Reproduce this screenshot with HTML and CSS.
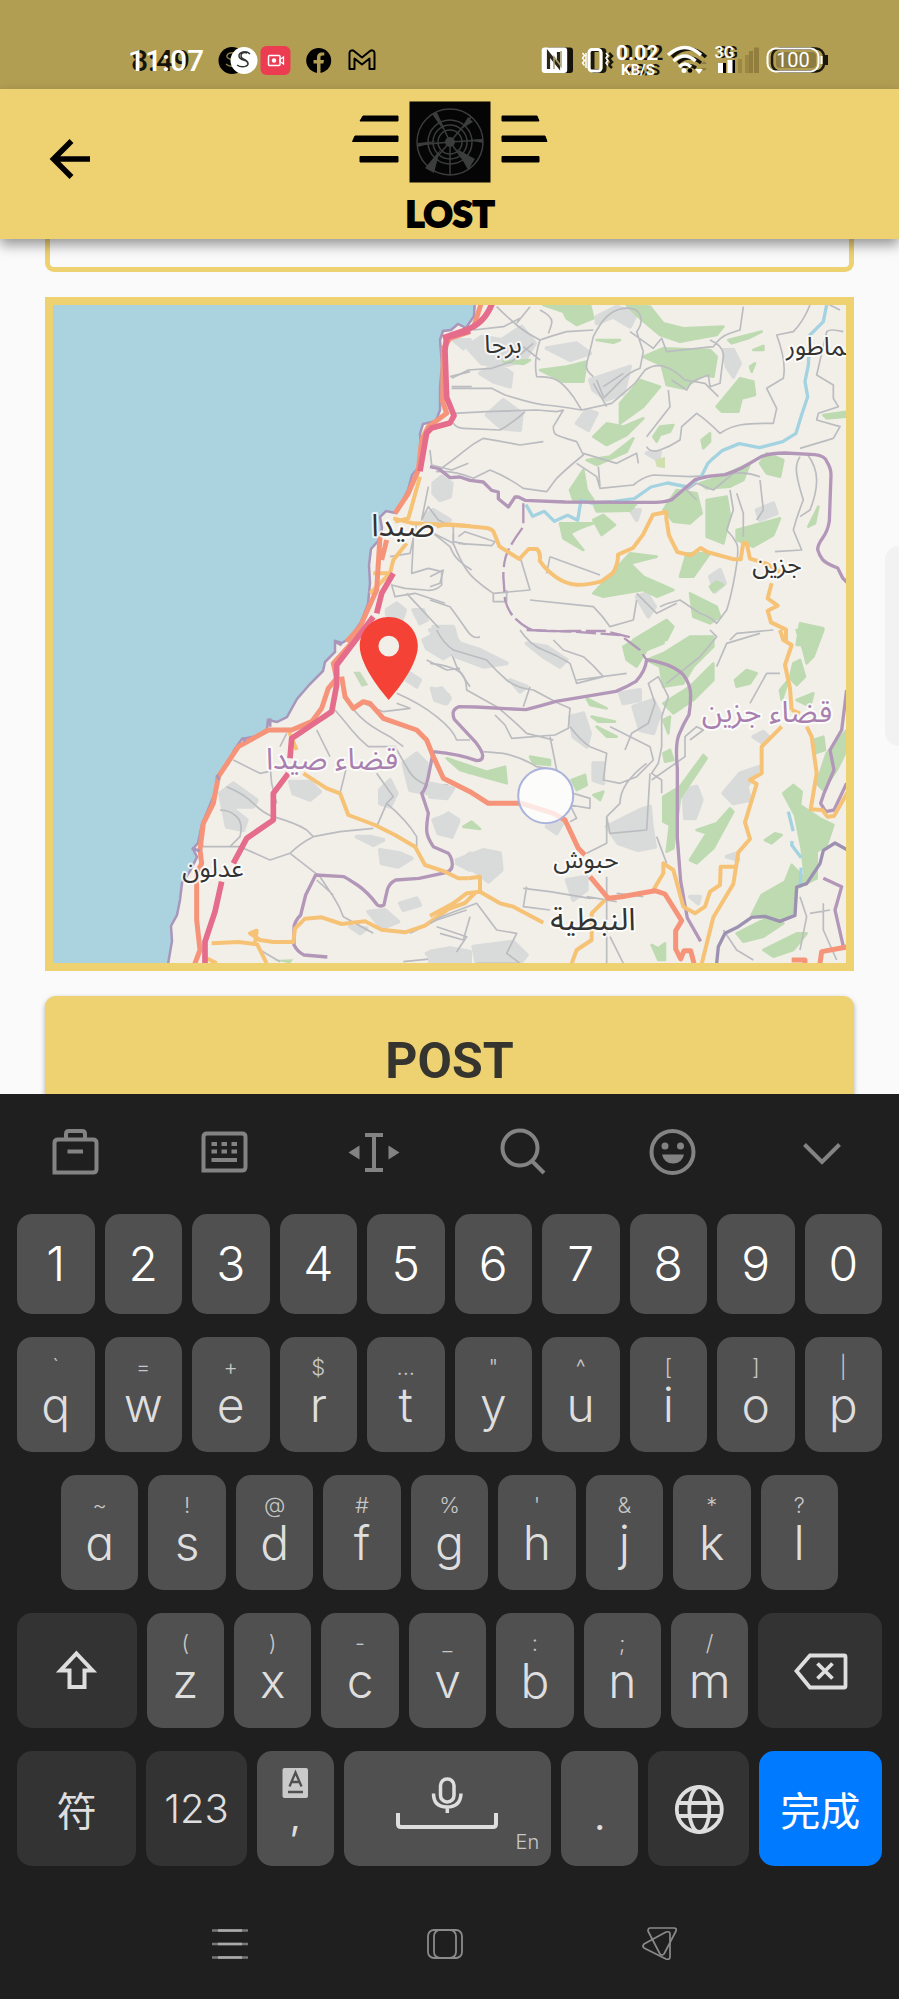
FILE: index.html
```html
<!DOCTYPE html>
<html lang="en">
<head>
<meta charset="utf-8">
<meta name="viewport" content="width=device-width, initial-scale=1">
<title>Lost</title>
<link rel="stylesheet" href="styles.css">
</head>
<body>
<header class="status">
  <div class="status-side">
    <svg class="s-icon" width="78" height="32" viewBox="128 44 78 32">
      <text x="131" y="71" class="clock ghost">8:49</text>
      <text x="128" y="71" class="clock">11:07</text>
    </svg>
    <svg class="s-icon" width="76" height="32" viewBox="216 44 76 32">
      <circle cx="232" cy="60.500" r="13.500"/>
      <path d="M237 55c-4-4-11-2-10 2 1 3 8 2 9 6 0 4-7 4-10 1" fill="none" stroke="#8c7c42" stroke-width="1.500"/>
      <circle cx="244" cy="60.500" r="13.500" fill="#fff"/>
      <path d="M250 54c-4-4-11-2-11 2 0 5 8 3 9 7 1 4-7 5-11 2M247 53c-4-1-6 0-6 3 0 4 7 3 7 8" fill="none" stroke="#333" stroke-width="1.500"/>
      <rect x="260.500" y="46" width="30" height="29" rx="6" fill="#ec3c52"/>
      <rect x="268.500" y="55.500" width="11.500" height="10" rx="1" fill="none" stroke="#fff" stroke-width="1.500"/>
      <circle cx="274" cy="60.500" r="2.200" fill="#fff"/>
      <path d="M280 59.500l3.500-2.500v7l-3.500-2.500z" fill="none" stroke="#fff" stroke-width="1.300"/>
    </svg>
    <svg class="s-icon" width="32" height="32" viewBox="302 44 32 32">
      <circle cx="318.700" cy="60.500" r="12.500"/>
      <path d="M317 73V63.500h-3.500v-3.600h3.500v-2.500c0-3.500 2-5 4.800-5 1 0 2 .1 2.500.2v3h-1.800c-1.700 0-2 .9-2 2v2.300h3.500l-.6 3.600h-2.900V73z" fill="#b29e52"/>
    </svg>
    <svg class="s-icon" width="36" height="32" viewBox="344 44 36 32">
      <path d="M349.500 69V53c0-2 2.500-3.500 4.500-2l8 6.500 8-6.500c2-1.500 4.500 0 4.500 2v16h-5V58.500l-7.500 6-7.500-6V69z" fill="none" stroke="#000" stroke-width="2" stroke-linejoin="round"/>
    </svg>
  </div>
  <div class="status-side status-right">
    <svg class="s-icon" width="36" height="32" viewBox="541 44 36 32">
      <rect x="546" y="47.500" width="27" height="25.500" rx="3" fill="#14120a"/>
      <rect x="541.700" y="47.500" width="25.500" height="25.500" rx="3" fill="#fff"/>
      <path d="M548.500 69V53.500l10 12.500V52" fill="none" stroke="#2a2718" stroke-width="3.200"/>
      <path d="M554 69V57l7 9V51" fill="none" stroke="#aa9f70" stroke-width="1.500"/>
    </svg>
    <svg class="s-icon" width="35" height="32" viewBox="579 44 35 32">
      <rect x="592.500" y="50" width="12" height="21" rx="2" fill="none" stroke="#1a170c" stroke-width="4"/>
      <path d="M609 53l3 3-3 3 3 3-3 3 3 3" fill="none" stroke="#1a170c" stroke-width="2.500"/>
      <rect x="589" y="49.500" width="12" height="21.500" rx="3" fill="none" stroke="#fff" stroke-width="3"/>
      <path d="M582.500 53l2 2.500-2 2.500 2 2.500-2 2.500 2 2.500M586 53v15M606 53l2 2.500-2 2.500 2 2.500-2 2.500 2 2.500" fill="none" stroke="#fff" stroke-width="1.500"/>
    </svg>
    <svg class="s-icon" width="49" height="34" viewBox="616 44 49 34">
      <text x="621" y="60" class="speed ghost">0.02</text><text x="626" y="75" class="unit ghost">KB/S</text>
      <text x="616" y="60" class="speed">0.02</text><text x="621" y="75" class="unit">KB/S</text>
    </svg>
    <svg class="s-icon" width="44" height="32" viewBox="667 44 44 32">
      <g fill="none" stroke="#14120a" stroke-width="3.500"><path d="M672 57q17-16 34 0M678 63q11-10 23 0M683 68q6-5 13 0"/></g>
      <g fill="none" stroke="#fff" stroke-width="3.500"><path d="M668 55q17-15 33 0M673.500 61q11-10 22 0M679 67q6-6 12 0"/></g>
      <circle cx="684" cy="70.500" r="2.500" fill="#fff"/><circle cx="690" cy="70.500" r="2.300"/>
      <path d="M695 69h8l-4 5z" fill="#fff"/><path d="M701 64l3-3 3 3zM701 68l3 3 3-3z" fill="#8c7c42"/>
    </svg>
    <svg class="s-icon" width="50" height="32" viewBox="713 44 50 32">
      <path d="M738 59h4v14h-4zM745 55h4v18h-4z" fill="#9b8844"/><path d="M749 51h4v22h-4zM754 47.500h5v25.500h-5z" fill="#927f3d"/>
      <path d="M721 63h5v10h-5zM730 60h5v13h-5z"/>
      <path d="M718 63h5v10h-5zM727.500 60h5v13h-5z" fill="#fff"/>
      <text x="718" y="58" class="net ghost">3G</text><text x="714.500" y="58" class="net">3G</text>
    </svg>
    <svg class="s-icon" width="64" height="32" viewBox="765 44 64 32">
      <rect x="772" y="48.500" width="52" height="23" rx="8" fill="none" stroke="#1a170c" stroke-width="2.500"/>
      <rect x="776" y="52" width="40" height="16" rx="4" fill="#8c7c42"/>
      <path d="M826.500 55v10" stroke="#1a170c" stroke-width="3"/>
      <rect x="767.500" y="48.500" width="51" height="23" rx="8" fill="none" stroke="#fff" stroke-width="2"/>
      <path d="M821.500 56v8" stroke="#fff" stroke-width="2"/>
      <text x="793" y="67" class="batt">100</text>
    </svg>
  </div>
</header>

<nav class="appbar">
  <button class="back" aria-label="Back">
    <svg width="44" height="44" viewBox="48 137 44 44"><path d="M90 159H54M71.500 141L53.500 159l18 18" fill="none" stroke="#000" stroke-width="5.500"/></svg>
  </button>
  <svg class="logo" width="200" height="134" viewBox="350 99 200 134">
    <path d="M363 116h35v5h-38zM355 136h43v5.500h-45.500zM360 156.500h38v5.500h-38zM502 116h35l2 5h-37zM502 136h43l2 5.500h-45zM502 156.500h37v5.500h-37z" stroke="#000" stroke-linejoin="round"/>
    <rect x="409.500" y="101.500" width="81" height="81" fill="#050505"/>
    <g fill="none" stroke="#3b3c3c" stroke-width="1.500"><circle cx="450" cy="142" r="33"/><circle cx="450" cy="142" r="22"/><circle cx="450" cy="142" r="12"/><circle cx="450" cy="142" r="17"/><path d="M450 142L436 112M450 142l21-25M450 142l33-2M450 142l-32 3M450 142l-22 25M450 142l20 27M450 142v33"/></g>
    <g fill="#3b3c3c"><circle cx="450" cy="142" r="5"/><path d="M440 150l-15 18 9 5zM457 149l18 10-7 11zM437 141l-19 2v4zM444 131l-8-19-4 2zM461 129l7-12 5 5zM468 140l15-1v4z"/></g>
    <text x="450" y="227" class="logo-text">LOST</text>
  </svg>
</nav>

<main class="content">
  <textarea class="field" aria-label="Description"></textarea>
  <div class="map">
  <svg viewBox="53 305 793 658" role="img" aria-label="Map">
    <rect x="53" y="305" width="793" height="658" fill="#aad3df"/>
    <path fill="#f2efe9" stroke="#a896bb" stroke-width="2.500" d="M475 300L474 316 466 328 458 324 451 330 443 331 440 340 442 365 440 387 440 410 436 421 423 424 420 434 421 448 418 468 412 475 408 490 396 513 386 511 380 517 382 528 379 540 371 549 369 565 370 583 368 604 361 622 350 638 342 643 335 641 335 652 325 662 323 671 310 684 297 699 287 717 277 722 268 720 267 729 258 736 242 739 234 750 228 764 217 777 216 790 210 805 202 824 198 843 193 849 197 857 190 871 182 883 180 900 177 915 171 926 172 941 167 970L860 970V295z"/>
    <g transform="translate(430 290) scale(.333333)">
      <g fill="#d9dada" class="soft-gray">
        <path d="M110 170l45-30 60 10 60-40 40 50-30 50-70 20-60-10zM150 250l50-30 45 30-5 40-50-15zM170 375l50-45 55 40-5 50-55-5zM10 580l25-20 30 20-5 40-30 10-20-20zM440 400l30-40 30 10-25 50zM620 920l30-10 25 40-20 30zM840 860l30-20 15 40-30 25zM880 180l30 0 20 40-20 40-20-30zM500 80l60-30 60 20-20 40-50-30-50 20zM480 270l60-20 60-20-20 80-50 20-40-30zM350 175l90-15 40 30-60 20zM650 490l40-5-5 25zM600 660l30 0-10 30zM980 660l50-20 10 30-50 20z"/>
      </g>
      <g fill="#bddab1" class="soft-green">
        <path d="M340 45l140 0 10 40-50 20-30-20-10-20zM590 45l70 5 40 50 60 15 120-5-20 25-110 20-60-20-60-50zM640 200l60-25 140 5 20 20-10 60-30-5-60 40-50-10-15-60zM330 240l80-10 60-15-10 60-60 0zM570 340l60-70 60 20-50 60-70 50zM490 440l40-40 50 10 60-25-50 50-60 30zM470 510l70-10 70-55-20 40-90 40zM860 350l70-85 40 10 5 40-40 10-10 40-50 0zM420 600l40-60 10 60 20 30-60 0zM490 640h130l-20 22-100 2zM700 660l40-60 60 10 15 60-35 30-50-5zM810 580l60-20 90-40-20 50-40 20-70 5zM990 520l20-30 50 20-10 50-40-10zM830 630l60-10 10 60-20 80-50-20zM920 720l130-35-20 50-60 35-50-20zM490 690l30-15 35 30-40 30zM390 700l100 0-40 15-30 15 40 50-60-35zM490 910l110-120 80 10-80 20 40 40 90 40-50 20-40-20-120 20zM750 860l20-70 70 0-50 70zM780 910l80 40 10 30-30 20-50-20zM1110 1000l70 15-20 50-60 0zM1135 710l30-60-10 50zM1180 375l70-10v15l-60 5zM895 150l100-25-40 20-50 15zM815 450l25-20 0 25-20 20zM670 440l20-30 40-5-10 20-30 10-10 20zM500 150h70l-20 8zM220 215l80-5-20 12zM840 890l20-15 20 10-30 20zM610 1050l100-60 20 20-20 40zM960 230l15-10-10 25zM970 180l30-12v12z"/>
      </g>
      <path fill="#cfe0ae" d="M675 510l30-10v35l-25-5z"/>
      <g class="minor">
        <path d="M200 50q30 30 60 55t70 45q60-20 80-25l80-5M330 60q40 20 35 40t-10 30M65 265l50-25 70-5 60-20 65-55M65 295l120 0 40 20q90 28 120 30t110 15l90-20 70-60 30-40q30-20 60-10t60 40l60 10 40 40M330 150q-20 60-10 110 40 0 60 10t50 50l25 40M490 260q-26-20-20-40t20-80q20-40 40-60t50-25q40-5 50 20t-10 50l20 60-10 50q-30 10-60 40l-50 50M600 125l70 50 25-30 15 40 140-15q20-30 50-40t30-10l10-70M840 150q44 20 40 50t-10 80l-30 10-5-35-50 20-15 25-45-30M1140 45q-20 50-50 80l-50 10q30 80 20 130l-50 30 30 60-10 45q-70 0-100 5t-60 25q-40-40-70-60l-45 40-5 40q-30 20-60 30t-40-10M650 440l70-90-5-50M70 400q10 15 30 15l110 5q50-30 75-55M70 370l100-5 150-5 60 5 20-5-30 50q0 20 10 25t60 20l20 40q-50 40-80 70l-30 40-70-10q-50-35-100-55l-50 25q-60-25-110-20 50-35 80-60t60-40q60 10 110 20l70-10M460 490l100 30 60-30 5 30M440 520l60 40 10 35 100-10q30-25 60-30l110 5 80-5M510 590l-5-60M990 560q-40-15-80-10l-60 50-50-20-30 20 30 30M900 600l10 60-20 60q20 20 30 40t-10 120q-10 50-20 80l-30 40q-20-20-50-30l-60-40q-40 10-60 20M920 610l20 60 0 70M990 570l10 90-20 30M1110 500q-14 20-10 50t20 80q-20 50-30 90l25 60-80 5M1130 490q30 40 30 80t-20 90l-30 20M1230 60l-40-20M1240 125q-40-10-50 0l-30 130 50 30 0 40 15 25-60 20-5 20 70 20-20 35-100 30M10 730l60 30q20 50 40 80t80 70l110-10-30-100M70 730v35M190 910v25h40l0-35M300 930l190 20q30 30 50 60l70-20 10-60M360 800l150 55M360 800l-10 50M0 930l60 20q30 40 50 70t40 20M0 860l40-20-10 40-30 10M620 910l60 60 60-30M900 1050l20-20 110-10M85 740l20-15 90 30-10 12-100-7M130 120l90-10 50-25M300 50l-40 50M280 170l50 40M490 280l40 70M500 270l20 50M520 290l60-40"/>
      </g>
      <path class="river" d="M1190 45l-10 50-40 40-5 90-10 50 8 45-20 60-15 50-40 25-70 18-60-12-50 20-30 25-15 15-20 40-40 30-60-12-50 12-50 35-60 8-70 5-30-8-10 60-30-15-40 18-30-30-35 15-20-35"/>
      <g class="bound">
        <path d="M0 530l25 5 35 28 30-2 30 10 40 5 25 25 20 5 0 20 30 25 20-30h10l20 10 120 5 180 1h90q30 0 50-8l70-60q40-12 90-15 30-10 50-20l60-35q30-10 70-10l90 5q30 4 35 20 13 20 13 40l-5 140q-5 30-20 50t-15 35q5 18 15 30t45 25l15 30 30 30"/>
        <path d="M280 640v70q-30 40-45 70t-15 80l5 70q10 35 30 55t40 30 130 8l100 0 80 20" stroke-dasharray="60 14" stroke-width="7"/>
      </g>
      <path class="road" d="M20 710l30-8 120 12q16 4 20 10l18 45 60 38 28-30h25q12 12 8 35 20 30 50 50t60 22 75-10l35-25q16-30 15-55l45-20 30-40 30-60 40-8 0 20 8 50 25 50 40 10 30-22 20 12 80 22h20l8-50 10 2 10 46 50 15 40 25M1025 880l-12 45 30 22-30 15 10 35 45 22v32"/>
    </g>
    <g transform="translate(40 290) scale(.333333)">
      <g fill="#d9dada" class="soft-gray"><path d="M1040 960l30-20 25 20-10 30-40 20zM1120 960l30 0 10 30-20 10zM1180 1010l60 0 10 40h-50zM1150 680l30-20 50 30-70 10zM1240 150l50 0-20 25z"/></g>
      <g class="minor"><path d="M1170 480l5 45 60 15 50-20M1165 590l-20 100 20-40 30 40 40 20M1180 730l50 40q10 25 25 40t40 30M1240 710v45l40 8M1120 750l-5 100 50-15 40 10 0 40q-20 20-50 15l-60-5-40-10 10 35 60-10 90 30M1100 910l130 140M1130 700l-20 90-60 10M1230 260l60-15M1235 290l60 0"/></g>
      <path class="road" d="M1140 560l-35 125-40 10M1060 685l60 15 170 8M1100 760l-40 50-10 40h-50M1050 850l-60 60"/>
      <path class="trunk" d="M1290 125l-60 20-20 30-2 160 12 35-55 40-20 40-10 90-30 70-40 60M1020 740l-10 160-50 110-40 45M1040 750l-15 60"/>
      <path class="motor" d="M1290 122l-70 20-5 40 5 140 22 55-12 22-55 15-15 15-20 115M1060 850l-35 60-15 60"/>
    </g>
    <path class="trunk-thin" d="M481 304l-7 22"/>
    <path class="motor-thin" d="M492 304q-8 20-26 26l-23 8"/>
    <g transform="translate(40 630) scale(.333333)">
      <g fill="#d9dada" class="soft-gray"><path d="M540 490l40-30 70 50-10 20-70 0 50 40-10 30-50-10zM750 455l60 0 30 30-30 25-50-20zM1090 400l40-30 30 30 0 90-50-10zM1020 480l30-30 20 40-20 40-30-10zM950 620l40 0 40 10-30 15zM1020 660l60 10 35 15-40 25-50-10zM1180 570l40-15 35 20-20 45-40-10zM985 845l50-5 40 35-50 20zM1080 820l50-15 10 20-50 15zM930 890l50 5-20 15zM1160 970l70-15 60 10v30l-110 0zM1110 130l30 20-10 20-30-20zM1175 175l50 20-10 25-30-10zM1150 30l40-20 60 50-40 25-50-30zM1250 700l40-30v50z"/></g>
      <path fill="#c3d9ba" d="M940 125l20 0 25 40-20 5z"/><path fill="#bddab1" d="M1220 385l70 20v30zM1270 595l20-20v20zM700 990l60-2-10 12z"/>
      <g class="minor"><path d="M885 240q30 35 50 60t50 50l80 0q20 35 40 70t60 45l60 0M910 200q20 30 50 60t90 60l40 30M1190 0q40 50 60 110l40 60M1160 90l60 30 40-5M970 220l60 25 80-10-40-15M1070 190q70 30 120 70t60 70l40 0M580 390l80 40 25-5M685 350l10 110 15 60M740 310l-20 40M830 300l40 80M920 410l-20 80M1010 430l50 70-20 20q60 50 90 100l0 30M1040 520l-30 70M560 470q50 20 80 50t60 40q70 20 100 40l20 20 80-15 100-10M820 620q-40 20-70 50l-60 20-90-40-110 0-10-20M540 540q30 0 50 20t10 60l-30 30M750 670l90 70q20 30 40 60t30 60l90 50M1110 910l80-40 90-30M1190 890l90 30-40 60-150 15M830 750l50 45M660 960l60 35"/></g>
      <g class="bound"><path d="M1180 365q-8 38-15 75t-20 50l20 60q-5 30-5 50t20 50l45 20q12 15 12 35t-30 25l-70 15-70 5q-20 10-25 30t-10 45q-12 6-20 0-30-40-60-60t-40-25l-85-5-30 60-15 60q-20 20-20 40t0 50q10 20 30 30l70 6"/></g>
      <path class="road" d="M745 300l25 60M790 430l70 45 40 15 25 65 80 30 60 30 60 35 30 55 60 20 40 20h30M515 940l80-4 50 6 5-40-20 8 30 20 40 6h60l5-40 30-30 50-4 60 20 70-8 50 25 70 8 60-20 70-50 50-18 30-30M650 940l30 60M500 985l30 15"/>
      <path class="trunk" d="M970 0l-90 100 10 45-25 30-20 60-30 40-60 25-70 0-90 50-60 90-15 80-30 60-10 80 5 40-15 30v140l10 90-30 80M905 140l10 60 25 35 30-20 20 5 40 45 100 35 30 30 20 50"/>
      <path class="motor" d="M1000-40l-110 145 0 60-15 80-60 40-60 40-5 60M745 430l-45 60 0 80-80 55-40 75M545 755l-20 90-30 90 0 65"/>
      <path fill="none" stroke="#a896bb" stroke-width="9" d="M885 35l20 10M690 265v25M605 325l12 8M530 435l8 14M455 655l25 8"/>
    </g>
    <g transform="translate(430 630) scale(.333333)">
      <g fill="#d9dada" class="soft-gray"><path d="M10 180l25-5 25 30-10 15-20-5zM0 0h60l30 40 60 20 80 40-70 10-80-30-60-50zM290 40l60 10 60 40-20 20-50-30zM240 150l50 20-20 15zM420 260l40-10 20 60-10 40-40-30zM610 230l60-20 20 40-20 60-40-10zM570 190l60-10 0 30-50 10zM0 460l70 15-20 30-50-5zM15 575l40-25 30 20-20 50-30-10zM80 690l80-30 50 10 5 50-40 35-30-25zM490 400l30 0 0 60-30-10zM530 590l100-50 30-10 5 60 10 60-50 10-60-20zM760 480l40-10 15 40-20 55-30 0zM880 490l50-60 60-20-40 60 10 40-50 10zM970 320l30-15 20 20-20 15zM410 750l60-10 0 40-40 30zM780 800l30 0-5 20zM130 950l120-15 40 40-20 25H140zM0 965l60-10 30 30-20 15H0zM350 590l50-15-20 35zM890 680l30-10 5 20z"/></g>
      <g fill="#bddab1" class="soft-green"><path d="M580 50l60-35 70-15-10 40-50 20-30 50-30-20zM700 70l80-50 70 0 0 30-60 60-30 50-60 10-10-60-40-20zM700 220l80-50 70-70 0 50-60 60-60 40zM700 270l20-10-5 50zM1050 180l25-30-20 60zM915 150l35-30 30 10-20 30-40 10zM1090 100l20-10 15 50-25 25-20-20zM1100 0h80l-30 80-20 20-10-40zM1150 330l30-10 5 40-30 10zM1190 370l60-70v60l-30 60-40 60-20-20zM50 385l120 40 55-15 5 50-70-20-70-20zM300 380l60 10 0 15-50-5zM425 450l40-15 5 30-30 15zM490 495l30-10-10 25zM700 500l50-30 70-95 10 10-80 120-20 150-20 10 10-80-20-10zM800 600l60-20 40-45 10 10-60 110-50 45-20-10 50-80zM1060 490l30-25 25 20-5 40 60 40 40 20-20 60-30 20 0 80-60 30-5 70-60 30-70-20 30-60 70-40 20-50 40 40-10-90-20-100zM1100 210l50-20-10 40zM470 205l60 30-50-10zM485 260l70 15-50 0zM500 290l60 30-30 0zM100 590l25-15 25 22zM665 945l20 10 20-15 0 50-20 0zM920 910l80-40 60 10-60 40-60 15zM1000 960l100-50 30 0-40 50-60 20zM700 370l20-10 10 30-25 5zM1005 630l30-20 20 5-30 25z"/></g>
      <g class="minor"><path d="M0 100q50 5 80 20t30 60l90 50q50 40 90 80l80 20M20 0q20 40 50 60l100 30q30 35 60 60t80 30l75 40 35 15-5 60-40 20-130 10-20-40-30-30M270 0q30 45 70 60t80 40l20 60 80-20q-30-35-60-60l-60-20-30-30M440 150l150-20M280 230l20-60M420 290q30 40 60 60l50 20-10 80 50 10 50-20 50-50-10-40-100-50-20-10M585 360l20-50 50-30 20-60-20-60 30-20 30 60-20 60 0 90-10 50-20 30 30 20 0 40M650 400q-40 30-60 60t-20 60l-40 40 10 50 110-10 10-170M780 330l40-30-20-10-35 30 0 60-100 70M360 320l20 100-60-10q-50-30-100-40l-60-5M430 490l50 15 0 30-60-10 20 40-20 10M530 560v80l-60 30M840 0l20 20-50 60-100 80M1050 130h-40l-50 90M860 110l30-70 100-30M530 740v260M540 920l40 80M0 880q30-20 60-30l80-30q30 40 60 80l60 10-30 60 40 30H140M100 930l-70-20M100 930l20-70M290 770l-10 60 80 10M280 775l80 10 120 20M470 800l90 15M560 790l80 10M680 620l30 80M880 900l40 60 50 30M1110 800l20 60-20 100M1180 820l0 80 40 90M1140 850l60-10"/></g>
      <path class="river" d="M1075 545l15 60-5 40 30 40-5 90" stroke-dasharray="60 30"/>
      <g class="bound">
        <path d="M10 365q80 8 130 27 18 0 18-14t-20-40l-65-70q-12-30 15-38l50 1 150 8q45-12 90-25l90-15 90-15q30-12 60-30 28-30 32-65 30 4 60 15t50 30q22 30 22 60t-5 60q-18 30-30 60t-5 100v210l10 130 20 110 40 70"/>
        <path d="M290 0l140 5 140 10 60 45 23 35" stroke-dasharray="60 14" stroke-width="7"/>
        <path d="M1250 180l-15 120-35 60 12 60-30 70-10 30 15 25 25-5 38-80M1180 745l55 25-20 70 25 110"/>
        <path d="M860 1000l5-50 20-40 40-20 40-28 40-3 45 15 45-18 5-85 30-10 40-60 10-40 35-22 35 20" stroke="#9c91b0"/>
      </g>
      <path class="road" d="M115 745l35-5 0 45-40 5-40 30-70 38M150 785l60 35 40 10 90 48M525 810l-40 40v80l-45 30-15 40M670 780l30-50v-30l30 20 30 110 35 20 30-20 15-45 30-20 2-55h50M1055 290l-60 60 0 80-35 20 20 12-35 115 15 50-35 40-15 95-60 100-35 140M1050 0l10 30 25 15-20 60 15 70 5 65M1130 290l15 30 15 110-18 108 35 2 15 20 20-2 40-70M1085 240l25 10"/>
      <path class="trunk" d="M8 375l32 70 80 40 55 35h100l95 30 35 20 40 85 20 20M480 740l55 65 40-5 100-18 30 10 50 80-18 30 0 55 15 30 10-25 20 0 10 38M1170 1000l5-35 80-15M1085 990h40v10"/>
    </g>
    <g class="label">
      <text x="503" y="353">برجا</text>
      <text x="822" y="355">عماطور</text>
      <text x="403" y="536" class="big">صيدا</text>
      <text x="777" y="573">جزين</text>
      <text x="213" y="877">عدلون</text>
      <text x="586" y="868">حبوش</text>
      <text x="593" y="930" class="big">النبطية</text>
      <text x="332" y="769" class="area">قضاء صيدا</text>
      <text x="767" y="722" class="area">قضاء جزين</text>
    </g>
    <path transform="translate(339 608.700) scale(4.150)" fill="#f44336" fill-rule="evenodd" d="M12 2C8.130 2 5 5.130 5 9c0 5.250 7 13 7 13s7-7.750 7-13c0-3.870-3.130-7-7-7zm0 9.500a2.500 2.500 0 1 1 0-5 2.500 2.500 0 0 1 0 5z"/>
    <circle cx="545.700" cy="795.700" r="27.500" fill="#fff" fill-opacity=".78" stroke="#a9b3dc" stroke-width="2"/>
  </svg>
  </div>
  <button class="post">POST</button>
</main>
<div class="edge-handle"></div>

<section class="keyboard" aria-label="Keyboard">
  <div class="tools">
    <button aria-label="Toolbox"><svg width="52" height="52" viewBox="48 1126 52 52"><path d="M53.500 1172.500V1143q0-3.500 3.500-3.500h35q3.500 0 3.500 3.500v26q0 3.500-3.500 3.500zM65 1139v-5q0-3 3-3h13q3 0 3 3v5M66.500 1151.500h15.500"/></svg></button>
    <button aria-label="Keyboard layout"><svg width="52" height="52" viewBox="197 1126 52 52"><path d="M202.500 1170.500V1137q0-3.500 3.500-3.500h35q3.500 0 3.500 3.500v30q0 3.500-3.500 3.500zM210.500 1160h25.500M210.500 1144h5.500m4.500 0h5.500m4.500 0h5.500M210.500 1151.500h5.500m4.500 0h5.500m4.500 0h5.500"/></svg></button>
    <button aria-label="Move cursor"><svg width="52" height="52" viewBox="347 1126 52 52"><path d="M364 1135h18M364 1170h18M373 1135v35"/><path class="solid" d="M347.500 1152.500l11-7v14zM398.500 1152.500l-11-7v14z"/></svg></button>
    <button aria-label="Search"><svg width="52" height="52" viewBox="496 1126 52 52"><circle cx="519" cy="1148" r="17.500"/><path d="M531 1161l12 12"/></svg></button>
    <button aria-label="Emoji"><svg width="52" height="52" viewBox="647 1126 52 52"><circle cx="672.500" cy="1152" r="21"/><path class="solid" d="M662 1154.500h22q-2 9-11 9t-11-9z"/><circle class="solid" cx="665" cy="1146" r="3.500"/><circle class="solid" cx="680.500" cy="1146" r="3.500"/></svg></button>
    <button aria-label="Hide keyboard"><svg width="52" height="52" viewBox="798 1126 52 52"><path d="M806.500 1144.500l17.500 17.500 17.500-17.500"/></svg></button>
  </div>
  <div class="rows">
    <div class="row numbers"><button class="key">1</button><button class="key">2</button><button class="key">3</button><button class="key">4</button><button class="key">5</button><button class="key">6</button><button class="key">7</button><button class="key">8</button><button class="key">9</button><button class="key">0</button></div>
    <div class="row"><button class="key"><small>`</small>q</button><button class="key"><small>=</small>w</button><button class="key"><small>+</small>e</button><button class="key"><small>$</small>r</button><button class="key"><small>...</small>t</button><button class="key"><small>"</small>y</button><button class="key"><small>^</small>u</button><button class="key"><small>[</small>i</button><button class="key"><small>]</small>o</button><button class="key"><small>|</small>p</button></div>
    <div class="row inset"><button class="key"><small>~</small>a</button><button class="key"><small>!</small>s</button><button class="key"><small>@</small>d</button><button class="key"><small>#</small>f</button><button class="key"><small>%</small>g</button><button class="key"><small>'</small>h</button><button class="key"><small>&amp;</small>j</button><button class="key"><small>*</small>k</button><button class="key"><small>?</small>l</button></div>
    <div class="row"><button class="key fn wide" aria-label="Shift"><svg width="44" height="44" viewBox="56 1648 44 44"><path d="M77.500 1652.500l16 17h-8V1686h-15v-16.500h-9z" fill="none" stroke="#dedede" stroke-width="4"/></svg></button><button class="key"><small>(</small>z</button><button class="key"><small>)</small>x</button><button class="key"><small>-</small>c</button><button class="key"><small>_</small>v</button><button class="key"><small>:</small>b</button><button class="key"><small>;</small>n</button><button class="key"><small>/</small>m</button><button class="key fn edge" aria-label="Backspace"><svg width="56" height="40" viewBox="793 1649 56 40"><path d="M797.500 1669l13.500-15.500h34q1.500 0 1.500 1.500v29q0 1.500-1.500 1.500h-34zM818.500 1661.500l15 15m0-15l-15 15" fill="none" stroke="#dedede" stroke-width="3.800"/></svg></button></div>
    <div class="row"><button class="key fn wide cjk">符</button><button class="key fn mid">123</button><button class="key comma"><svg width="26" height="32" viewBox="282 1766 26 32"><rect x="282.500" y="1767" width="25.500" height="30" rx="2" fill="#cacaca"/><path d="M289.500 1785.500l6-14 6 14M291.500 1781h8M288 1791h15" fill="none" stroke="#505050" stroke-width="2.300"/></svg><span>,</span></button><button class="key space" aria-label="Space"><svg width="104" height="54" viewBox="396 1774 104 54"><g fill="none" stroke="#dedede" stroke-width="3.500"><rect x="441.500" y="1777" width="13.500" height="23" rx="6.500"/><path d="M434.500 1791.500q0 13.500 13.500 13.500t14-13.500M448.300 1805v6"/><path d="M399 1811v11q0 3 3 3h92q3 0 3-3v-11" stroke-width="4"/></g></svg><span class="lang">En</span></button><button class="key comma"><i></i><span>.</span></button><button class="key fn mid" aria-label="Language"><svg width="52" height="52" viewBox="673 1780 52 52"><g fill="none" stroke="#dedede" stroke-width="3.800"><circle cx="699.300" cy="1806.500" r="22.500"/><ellipse cx="699.300" cy="1806.500" rx="10" ry="22.500"/><path d="M679 1800h41M679 1813h41"/></g></svg></button><button class="key done edge cjk">完成</button></div>
  </div>
  <div class="sysnav">
    <button aria-label="Recents"><svg width="40" height="40" viewBox="210 1924 40 40"><path d="M212 1930.500h36M212 1944h36M212 1957.500h36" stroke="#777" stroke-width="2.500"/><path d="M218 1930.500h24M218 1944h24M218 1957.500h24" stroke="#aaa" stroke-width="2.500"/></svg></button>
    <button aria-label="Home"><svg width="40" height="40" viewBox="425 1924 40 40"><g fill="none" stroke="#8a8a8a" stroke-width="1.800"><rect x="428" y="1930" width="28" height="28" rx="6"/><rect x="434" y="1930" width="28" height="28" rx="6"/></g></svg></button>
    <button aria-label="Back"><svg width="40" height="40" viewBox="640 1922 40 40"><g fill="none" stroke="#8a8a8a" stroke-width="1.700" stroke-linejoin="round"><path d="M650 1926h24q3 0 2 3l-12 23q-2 2-4 0l-12-23q0-3 2-3z"/><path d="M644 1942l22-12q4-1 4 2v23q0 3-4 2l-22-11q-2-2 0-4z"/></g></svg></button>
  </div>
</section>
</body>
</html>
```
FILE: styles.css
```css
* { box-sizing: border-box; }
body {
  margin: 0;
  height: 100vh;
  display: flex;
  flex-direction: column;
  overflow: hidden;
  background: #fafafa;
  font-family: Roboto, "Liberation Sans", sans-serif;
}
button { margin: 0; padding: 0; border: 0; background: none; color: inherit; font: inherit; }
svg { display: block; flex: none; }

.status {
  flex: none;
  display: flex;
  justify-content: space-between;
  height: 89px;
  padding: 44px 70px 0 128px;
  background: #b29e52;
}
.status-side { display: flex; gap: 10px; }
.status-right { gap: 2px; }
.s-icon { overflow: visible; }
.clock { font-size: 30px; font-weight: 500; fill: #fff; }
.speed { font-size: 21px; font-weight: 700; fill: #fff; }
.unit { font-size: 15px; font-weight: 700; fill: #fff; }
.net { font-size: 16px; font-weight: 500; fill: #fff; }
.batt { font-size: 20px; fill: #fff; text-anchor: middle; }
.ghost { fill: #14120a; }

.appbar {
  flex: none;
  position: relative;
  z-index: 1;
  display: grid;
  grid-template-columns: 1fr auto 1fr;
  align-items: start;
  height: 150px;
  padding: 10px 48px 0;
  background: #eed170;
  box-shadow: 0 6px 12px rgba(0, 0, 0, .4);
}
.back { width: 44px; margin-top: 38px; }
.logo { overflow: visible; }
.logo-text {
  font-family: Lato, sans-serif;
  font-size: 36px;
  font-weight: 900;
  text-anchor: middle;
  stroke: #000;
  stroke-width: 2px;
}

.content {
  flex: 1;
  min-height: 0;
  overflow: hidden;
  display: flex;
  flex-direction: column;
  gap: 25px;
  padding: 0 45px;
}
.field {
  flex: none;
  display: block;
  width: 100%;
  height: 33px;
  border: 5px solid #eed170;
  border-top: 0;
  border-radius: 0 0 9px 9px;
  background: transparent;
  resize: none;
}
.map { flex: none; border: 8px solid #eed170; }
.map svg { width: 100%; height: auto; }
.soft-gray { stroke: #d9dada; stroke-width: 12px; stroke-linejoin: round; }
.soft-green { stroke: #bddab1; stroke-width: 8px; stroke-linejoin: round; }
.minor { fill: none; stroke: #bbbcc0; stroke-width: 5px; stroke-linejoin: round; }
.river { fill: none; stroke: #a3d3e1; stroke-width: 10px; stroke-linejoin: round; }
.bound { fill: none; stroke: #b397b9; stroke-width: 10px; stroke-linejoin: round; }
.road { fill: none; stroke: #f6c276; stroke-width: 12px; stroke-linejoin: round; }
.trunk { fill: none; stroke: #f6947a; stroke-width: 15px; stroke-linejoin: round; }
.motor { fill: none; stroke: #e56c8a; stroke-width: 17px; stroke-linejoin: round; }
.trunk-thin { fill: none; stroke: #f6947a; stroke-width: 5px; }
.motor-thin { fill: none; stroke: #e56c8a; stroke-width: 6px; }
.label {
  font-family: "Noto Sans Arabic", "DejaVu Sans", sans-serif;
  font-size: 25px;
  fill: #333;
  text-anchor: middle;
  stroke: rgba(255, 255, 255, .75);
  stroke-width: 4px;
  stroke-linejoin: round;
  paint-order: stroke;
}
.big { font-size: 31px; }
.area { font-size: 30px; fill: #a87fae; }

.post {
  flex: none;
  padding: 36px 0;
  border-radius: 11px;
  background: #eed170;
  box-shadow: 0 2px 5px rgba(0, 0, 0, .3);
  color: #35342e;
  font-size: 50px;
  font-weight: 700;
  line-height: 58px;
}
.edge-handle {
  position: absolute;
  top: 546px;
  right: 0;
  width: 14px;
  height: 200px;
  border-radius: 14px 0 0 14px;
  background: #f2f2f2;
}

.keyboard {
  flex: none;
  position: relative;
  background: #1f1f1f;
  color: #dedede;
  font-family: Inter, "Noto Sans CJK SC", sans-serif;
}
.tools { display: flex; height: 120px; padding: 32px 2px 0 0; }
.tools button { flex: 1; display: flex; justify-content: center; align-items: flex-start; }
.tools svg { fill: none; stroke: #838383; stroke-width: 4px; }
.tools .solid { fill: #838383; stroke: none; }
.rows { display: flex; flex-direction: column; gap: 23px; padding: 0 17px; }
.row { display: flex; gap: 10px; height: 115px; }
.inset { padding: 0 44px; }
.key {
  flex: 77 1 0;
  min-width: 0;
  display: flex;
  flex-direction: column;
  align-items: center;
  padding-top: 16px;
  border-radius: 15px;
  background: #505050;
  font-size: 48px;
  font-weight: 300;
  line-height: 48px;
  font-feature-settings: "cv11";
}
.key small { font-size: 22px; line-height: 28px; color: #c8c8c8; }
.numbers { height: 100px; }
.numbers .key { justify-content: center; padding: 0; color: #fff; }
.fn, .done { justify-content: center; padding: 0; background: #333; }
.wide { flex-grow: 119; }
.edge { flex-grow: 123; }
.mid { flex-grow: 100; font-size: 40px; }
.cjk { font-family: "Noto Sans CJK SC", sans-serif; font-size: 40px; font-weight: 400; }
.done { background: #007aff; color: #fff; }
.comma i { height: 32px; }
.comma span { line-height: 34px; font-size: 38px; font-weight: 400; }
.space { flex-grow: 207; position: relative; padding-top: 25px; }
.lang {
  position: absolute;
  right: 12px;
  bottom: 12px;
  font-size: 20px;
  line-height: 24px;
  color: #c8c8c8;
}
.sysnav { display: flex; justify-content: center; gap: 175px; height: 133px; padding: 58px 10px 0 0; }
.sysnav button { display: flex; align-items: flex-start; }
```
